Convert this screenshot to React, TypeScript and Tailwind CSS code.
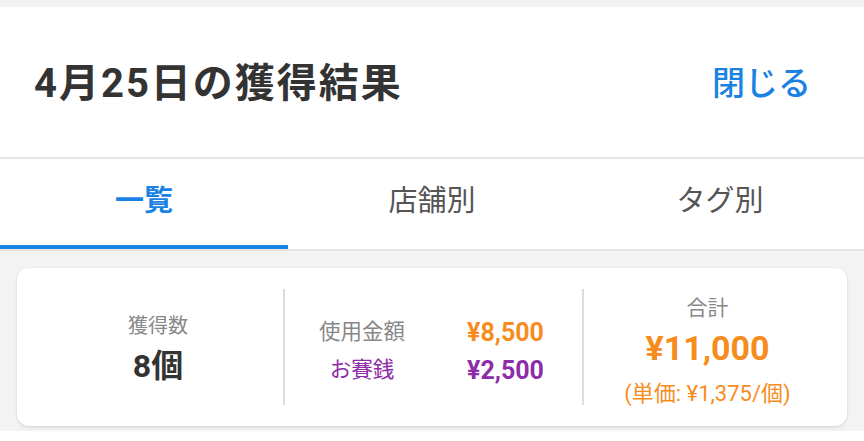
import React from 'react';

const font = { fontFamily: 'Roboto, "Noto Sans CJK JP", sans-serif' };

const tabs = ['一覧', '店舗別', 'タグ別'];

export default function App() {
  return (
    <div className="w-[864px] h-[441px] overflow-hidden bg-white" style={font}>
      {/* top strip */}
      <div className="h-[7px] bg-[#f2f2f2]" />

      {/* Header */}
      <div className="h-[152px] flex items-center justify-between pl-[34px] pr-[53px] border-b-2 border-[#e4e4e4]">
        <h1 className="text-[40px] font-bold text-[#333333] tracking-[0.05em] pt-[4px]">4月25日の獲得結果</h1>
        <button className="text-[33px] font-medium text-[#1a82e3] pt-[4px]">閉じる</button>
      </div>

      {/* Tabs */}
      <div className="flex border-b-2 border-[#e4e4e4]">
        {tabs.map((t, i) => (
          <div
            key={t}
            className={`flex-1 h-[90px] flex items-center justify-center text-[29px] border-b-4 ${
              i === 0 ? 'border-[#1a82e3] text-[#1a82e3] font-bold' : 'border-transparent text-[#555555]'
            }`}
          >
            {t}
          </div>
        ))}
      </div>

      {/* Summary */}
      <div className="bg-[#f3f3f3] px-[17px] pt-[17px] pb-[5px]">
        <div className="bg-white rounded-[12px] shadow-[0_1px_3px_rgba(0,0,0,0.15)] h-[158px] px-4 flex items-center">
          {/* Count */}
          <div className="w-[250px] shrink-0 h-[116px] flex flex-col items-center justify-center pt-[4px]">
            <p className="text-[20px] text-[#888888] leading-none">獲得数</p>
            <p className="mt-[14px] text-[32px] font-bold text-[#333333] leading-none">8個</p>
          </div>

          <div className="w-[2px] shrink-0 h-[116px] bg-[#dddddd]" />

          {/* Amounts */}
          <div className="w-[297px] shrink-0 h-[116px] flex items-center pl-[24px] pt-[8px]">
            <div className="grid grid-cols-[106px_auto] gap-x-[52px] gap-y-[13px] items-center">
              <span className="text-[21.5px] text-[#888888] text-center leading-none">使用金額</span>
              <span className="text-[25px] font-bold text-[#f78c1e] leading-none">¥8,500</span>
              <span className="text-[21.5px] text-[#8e2ca8] text-center leading-none">お賽銭</span>
              <span className="text-[25px] font-bold text-[#8e2ca8] leading-none">¥2,500</span>
            </div>
          </div>

          <div className="w-[2px] shrink-0 h-[116px] bg-[#dddddd]" />

          {/* Total */}
          <div className="flex-1 min-w-0 h-[116px] flex flex-col items-center justify-center pt-[8px]">
            <p className="text-[21px] text-[#888888] leading-none">合計</p>
            <p className="mt-[12px] text-[34px] font-bold text-[#f78c1e] leading-none">¥11,000</p>
            <p className="mt-[18px] text-[22px] text-[#f78c1e] leading-none">(単価: ¥1,375/個)</p>
          </div>
        </div>
      </div>
    </div>
  );
}
